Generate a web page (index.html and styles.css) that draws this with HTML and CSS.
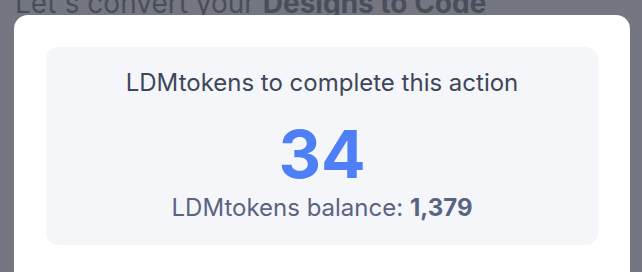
FILE: index.html
```html
<html>

<head>
    <meta charset="utf-8" />
    <title>LDMtokens</title>
    <link rel="stylesheet" href="styles.css">
</head>

<body>
    <div class="page">
        <h1 class="page-title">Let's convert your <b>Designs to Code</b></h1>
    </div>
    <div class="modal">
        <div class="cost-box">
            <p class="cost-label">LDMtokens to complete this action</p>
            <p class="cost-value">34</p>
            <p class="balance">LDMtokens balance: <b>1,379</b></p>
        </div>
    </div>
</body>

</html>
```

FILE: styles.css
```css
* {
    margin: 0;
    padding: 0;
}

body {
    background-color: #747781;
    font-family: Inter, "Liberation Sans", sans-serif;
    overflow: hidden;
}

.page {
    padding: 0 15px;
    height: 272px;
}

.page-title {
    margin-top: -14px;
    font-size: 28px;
    line-height: 34px;
    font-weight: 400;
    color: #4a4e5a;
}

.page-title b {
    font-weight: 700;
}

.modal {
    position: absolute;
    top: 15px;
    left: 14px;
    width: 616px;
    height: 300px;
    background: #fff;
    border-radius: 14px;
    padding: 32px;
    box-sizing: border-box;
}

.cost-box {
    background: #f5f6fa;
    border-radius: 12px;
    padding: 21px 16px 22px;
    text-align: center;
}

.cost-label {
    font-size: 24px;
    line-height: 30px;
    color: #3e4659;
}

.cost-value {
    margin-top: 23px;
    font-size: 66px;
    line-height: 66px;
    font-weight: 700;
    color: #4f7ff6;
}

.balance {
    margin-top: 6px;
    font-size: 24px;
    line-height: 30px;
    color: #5a6482;
}

.balance b {
    font-weight: 700;
}
```
